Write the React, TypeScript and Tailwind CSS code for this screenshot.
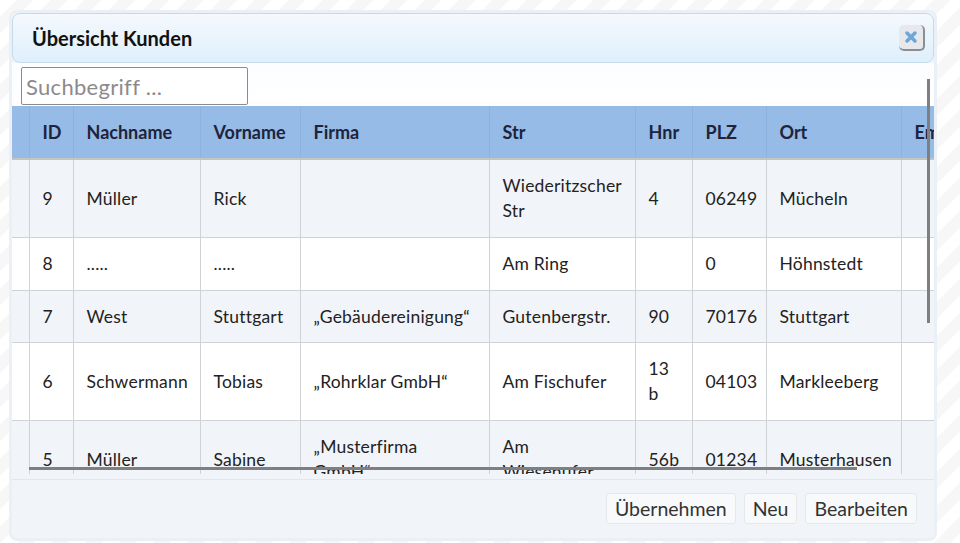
const font = { fontFamily: 'Lato, sans-serif' };

const columns = [
  { label: '', width: 'w-[17px]' },
  { label: 'ID', width: 'w-[44px]' },
  { label: 'Nachname', width: 'w-[127px]' },
  { label: 'Vorname', width: 'w-[100px]' },
  { label: 'Firma', width: 'w-[189px]' },
  { label: 'Str', width: 'w-[146px]' },
  { label: 'Hnr', width: 'w-[57px]' },
  { label: 'PLZ', width: 'w-[74px]' },
  { label: 'Ort', width: 'w-[135px]' },
  { label: 'Email', width: 'w-[120px]' },
];

const rows = [
  { h: 'h-[78px]', cells: ['', '9', 'Müller', 'Rick', '', 'Wiederitzscher Str', '4', '06249', 'Mücheln', ''] },
  { h: 'h-[53px]', cells: ['', '8', '.....', '.....', '', 'Am Ring', '', '0', 'Höhnstedt', ''] },
  { h: 'h-[52px]', cells: ['', '7', 'West', 'Stuttgart', '„Gebäudereinigung“', 'Gutenbergstr.', '90', '70176', 'Stuttgart', ''] },
  { h: 'h-[78px]', cells: ['', '6', 'Schwermann', 'Tobias', '„Rohrklar GmbH“', 'Am Fischufer', '13 b', '04103', 'Markleeberg', ''] },
  { h: 'h-[78px]', cells: ['', '5', 'Müller', 'Sabine', '„Musterfirma GmbH“', 'Am Wiesenufer', '56b', '01234', 'Musterhausen', ''] },
];

export default function App() {
  return (
    <div
      style={font}
      className="w-[960px] h-[543px] overflow-hidden pt-[10px] pl-[9px] bg-[repeating-linear-gradient(135deg,#ffffff_0px,#ffffff_12px,#f7f7f7_12px,#f7f7f7_24px)]"
    >
      <div className="relative w-[928px] h-[531px] flex flex-col rounded-lg border-[3px] border-[#eaf0f6] bg-[#f1f4f8] overflow-hidden">
        <div className="h-[50px] shrink-0 flex items-center justify-between pl-[19px] pr-[8px] rounded-lg border border-[#c5dbec] bg-gradient-to-b from-[#f4f9fd] to-[#dfeffc]">
          <h1 className="text-[20px] font-bold text-[#111]">Übersicht Kunden</h1>
          <button className="w-[26px] h-[26px] flex items-center justify-center rounded-[5px] bg-[#e6e8ec] border-r-2 border-b-2 border-[#8a8f96] text-[#6ea6d8]">
            <svg width="14" height="14" viewBox="0 0 14 14">
              <path d="M3 3 L11 11 M11 3 L3 11" stroke="currentColor" strokeWidth="3.5" strokeLinecap="round" />
            </svg>
          </button>
        </div>

        <div className="h-[43px] shrink-0 bg-gradient-to-b from-[#fbfdff] to-white pl-[9px] pt-[4px]">
          <input
            placeholder="Suchbegriff ..."
            className="w-[227px] h-[38px] px-[4px] rounded-[2px] border border-[#8d8a8d] bg-white text-[22px] tracking-[0.3px] text-[#333] placeholder:text-[#8d8a8d] outline-none"
          />
        </div>

        <div className="h-[368px] shrink-0 overflow-hidden bg-white">
          <table className="w-[1009px] table-fixed border-collapse text-[17.5px] tracking-[0.2px] text-[#222]">
            <thead>
              <tr className="h-[53px] bg-[#95bbe6] border-b-2 border-[#c4c4c4]">
                {columns.map((c, i) => (
                  <th key={i} className={`${c.width} ${i === 0 ? 'px-0' : 'px-[13px]'} text-left text-[18px] tracking-normal font-bold text-[#20233a] whitespace-nowrap border-r border-[#8fb2da]`}>
                    {c.label}
                  </th>
                ))}
              </tr>
            </thead>
            <tbody>
              {rows.map((r, i) => (
                <tr key={i} className={`${r.h} border-b border-[#cfd3d6] ${i % 2 === 0 ? 'bg-[#f1f4f8]' : 'bg-white'}`}>
                  {r.cells.map((cell, j) => (
                    <td key={j} className={`${j === 0 ? 'px-0' : 'px-[13px]'} py-[12px] leading-[25px] border-r border-[#cfd3d6] overflow-hidden`}>
                      {cell}
                    </td>
                  ))}
                </tr>
              ))}
            </tbody>
          </table>
        </div>

        <div className="h-[5px] shrink-0 bg-[#f1f4f8]" />

        <div className="flex-1 border-t border-[#e3e6ea] flex items-start justify-end gap-[8px] pt-[13px] pr-[17px]">
          {['Übernehmen', 'Neu', 'Bearbeiten'].map((label) => (
            <button key={label} className="h-[31px] px-[8px] rounded-[3px] border border-[#e6e8eb] bg-[#f8f9fa] text-[19.5px] leading-none text-[#333]">
              {label}
            </button>
          ))}
        </div>

        <div className="absolute left-[17px] top-[454px] w-[828px] h-[3px] bg-[#7d7f82]" />
        <div className="absolute left-[915px] top-[66px] w-[3px] h-[244px] bg-[#7d7f82]" />
      </div>
    </div>
  );
}
